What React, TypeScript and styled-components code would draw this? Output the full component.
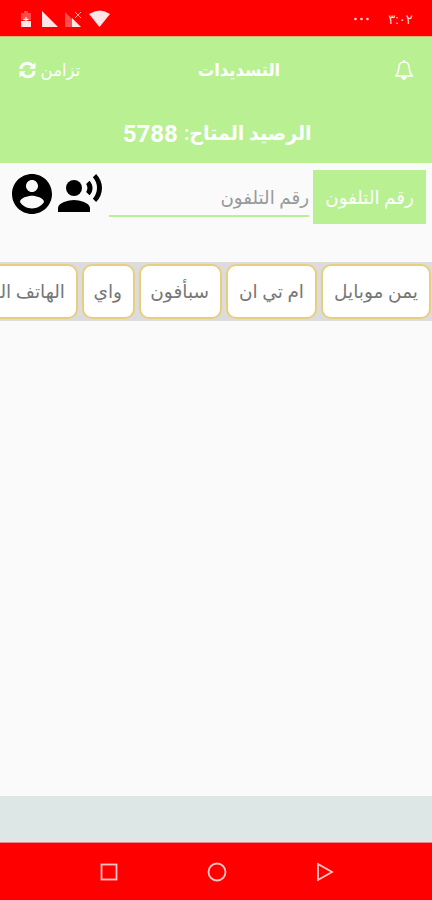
import React from "react";
import styled, { createGlobalStyle } from "styled-components";

const GlobalStyle = createGlobalStyle`
  * { box-sizing: border-box; }
  body { margin: 0; background: #fafafa; }
`;

const Screen = styled.div`
  display: flex;
  flex-direction: column;
  width: 432px;
  height: 900px;
  overflow: hidden;
  direction: rtl;
  background: #fafafa;
  font-family: Roboto, "DejaVu Sans", sans-serif;
`;

const Label = styled.span<{ $size: number; $stretch?: number; $y?: number }>`
  display: inline-block;
  flex: none;
  white-space: nowrap;
  line-height: 1.2;
  font-size: ${(p) => p.$size}px;
  transform: translateY(${(p) => p.$y ?? 0}px) scaleX(${(p) => p.$stretch ?? 1});
`;

const StatusBar = styled.div`
  display: flex;
  flex: none;
  align-items: center;
  justify-content: space-between;
  height: 36px;
  padding: 2px 19px 0 20px;
  background: #ff0000;
  color: #ffdada;
`;

const StatusTime = styled.div`
  display: flex;
  align-items: center;
  gap: 18px;
`;

const Header = styled.header`
  flex: none;
  height: 127px;
  background: #b8f092;
  border-top: 1px solid #d2b86b;
  color: #ffffff;
`;

const TitleBar = styled.div`
  display: grid;
  grid-template-columns: 100px 1fr 100px;
  align-items: center;
  height: 66px;
  padding: 0 18px 0 19px;
`;

const Title = styled.div`
  display: flex;
  justify-content: center;
  padding-left: 45px;
  font-weight: 700;
`;

const SyncButton = styled.div`
  display: flex;
  align-items: center;
  justify-content: flex-end;
  gap: 4px;
`;

const Balance = styled.div`
  display: flex;
  justify-content: center;
  align-items: center;
  gap: 6px;
  height: 61px;
  padding-left: 9px;
  font-weight: 700;

  span { transform-origin: left center; }
`;

const PhoneRow = styled.div`
  display: flex;
  flex: none;
  height: 99px;
  padding: 7px 6px 0 7.5px;
`;

const PhoneButton = styled.div`
  display: flex;
  align-items: center;
  justify-content: center;
  width: 113px;
  height: 54px;
  padding-top: 1px;
  background: #b8f092;
  color: #ffffff;
`;

const PhoneField = styled.div`
  display: flex;
  align-items: center;
  width: 200px;
  height: 47px;
  margin-right: 4px;
  padding-top: 10px;
  border-bottom: 2px solid #b8f092;
  color: #999999;
`;

const PhoneActions = styled.div`
  display: flex;
  flex: 1;
  justify-content: flex-end;
  height: 50px;

  svg { flex: none; }
`;

const ChipStrip = styled.div`
  display: flex;
  flex: none;
  gap: 4px;
  height: 59px;
  padding: 2px 1px;
  background: #dcdcdc;
  overflow: hidden;
`;

const Chip = styled.div<{ $width: number }>`
  display: flex;
  flex: none;
  align-items: center;
  width: ${(p) => p.$width}px;
  padding-right: 11px;
  border: 2px solid #e9cf7d;
  border-radius: 10px;
  background: #ffffff;
  color: #777777;
`;

const Content = styled.main`
  flex: 1;
`;

const Footer = styled.div`
  flex: none;
  height: 46px;
  background: #dde7e5;
`;

const NavBar = styled.nav`
  display: flex;
  flex: none;
  align-items: center;
  justify-content: center;
  gap: 84px;
  height: 58px;
  padding-left: 1px;
  border-top: 1px solid #f58583;
  background: #ff0000;
`;

const providers = [
  { name: "يمن موبايل", width: 110 },
  { name: "ام تي ان", width: 91 },
  { name: "سبأفون", width: 83 },
  { name: "واي", width: 53 },
  { name: "الهاتف الثابت", width: 130 },
];

const StatusIcons = () => (
  <svg width="92" height="20" viewBox="0 0 92 20" fill="#ffe6e6">
    <path d="M1 4h3V2h4v2h3v7H1z" opacity=".32" />
    <path d="M1 12h10v6H1z" />
    <path d="M6 8v5M3.500 10.500h5" stroke="#ffe6e6" strokeWidth="1.300" fill="none" />
    <path d="M22 2v16h16z" />
    <path d="M45 3l7 7v8h-7z" opacity=".35" />
    <path d="M52 9v9h9z" />
    <path d="M55 3l6 6m0-6-6 6" stroke="#ffb5b5" fill="none" />
    <path d="M69 5q11-7 21 0L79.500 18z" />
  </svg>
);

const SyncIcon = () => (
  <svg width="17" height="18" viewBox="0 0 17 18" fill="none" stroke="#fff" strokeWidth="3">
    <path d="M1.800 8A6.400 6.400 0 0 1 13.300 4.800" />
    <path d="M15.200 10A6.400 6.400 0 0 1 3.700 13.200" />
    <path d="M16.500 1.500v6.300h-6.300zM.5 16.500v-6.300h6.300z" fill="#fff" stroke="none" />
  </svg>
);

const BellIcon = () => (
  <svg width="20" height="22" viewBox="0 0 20 22" fill="none" stroke="#fff" strokeWidth="1.600" strokeLinejoin="round">
    <path d="M1.500 17h17c-2.400-2-3-4-3.200-8C15.100 5.300 13 3 10 3S4.900 5.300 4.700 9C4.500 13 3.900 15 1.500 17z" />
    <path d="M10 3V1" />
    <path d="M7 18h6q-1 3-3 3t-3-3z" fill="#fff" stroke="none" />
  </svg>
);

const VoiceIcon = () => (
  <svg width="48" height="48" viewBox="0 0 24 24" fill="#000">
    <circle cx="9" cy="9" r="4" />
    <path d="M9 15c-2.670 0-8 1.340-8 4v2h16v-2c0-2.660-5.330-4-8-4zM16.760 5.360l-1.680 1.690c.84 1.180.84 2.710 0 3.890l1.680 1.690c2.020-2.020 2.020-5.070 0-7.270zM20.070 2l-1.630 1.630c2.770 3.020 2.770 7.560 0 10.740L20.070 16c3.900-3.890 3.910-9.950 0-14z" />
  </svg>
);

const AccountIcon = () => (
  <svg width="48" height="48" viewBox="0 0 24 24" fill="#000">
    <path d="M12 2C6.480 2 2 6.480 2 12s4.480 10 10 10 10-4.480 10-10S17.520 2 12 2zm0 3c1.660 0 3 1.340 3 3s-1.340 3-3 3-3-1.340-3-3 1.340-3 3-3zm0 14.200c-2.500 0-4.710-1.280-6-3.220.03-1.990 4-3.080 6-3.080 1.990 0 5.970 1.090 6 3.080-1.290 1.940-3.500 3.220-6 3.220z" />
  </svg>
);

export default function App() {
  return (
    <Screen>
      <GlobalStyle />
      <StatusBar>
        <StatusTime>
          <Label $size={13.3} $y={1}>٣:٠٢</Label>
          <svg width="17" height="4" viewBox="0 0 17 4" fill="#ffdada">
            <circle cx="2.500" cy="2" r="1.300" />
            <circle cx="8.500" cy="2" r="1.300" />
            <circle cx="14.500" cy="2" r="1.300" />
          </svg>
        </StatusTime>
        <StatusIcons />
      </StatusBar>
      <Header>
        <TitleBar>
          <BellIcon />
          <Title><Label $size={17.5} $stretch={0.94}>التسديدات</Label></Title>
          <SyncButton>
            <Label $size={17} $stretch={0.97}>تزامن</Label>
            <SyncIcon />
          </SyncButton>
        </TitleBar>
        <Balance>
          <Label $size={20} $stretch={0.95} $y={-1}>الرصيد المتاح:</Label>
          <Label $size={24} $y={1}>5788</Label>
        </Balance>
      </Header>
      <PhoneRow>
        <PhoneButton><Label $size={18.3}>رقم التلفون</Label></PhoneButton>
        <PhoneField><Label $size={18.3}>رقم التلفون</Label></PhoneField>
        <PhoneActions>
          <VoiceIcon />
          <AccountIcon />
        </PhoneActions>
      </PhoneRow>
      <ChipStrip>
        {providers.map((p) => (
          <Chip key={p.name} $width={p.width}>
            <Label $size={18.5} $y={1}>{p.name}</Label>
          </Chip>
        ))}
      </ChipStrip>
      <Content />
      <Footer />
      <NavBar>
        <svg width="24" height="24" viewBox="0 0 24 24" fill="none" stroke="#ffc4c4" strokeWidth="1.800">
          <path d="M5 4l14 8-14 8z" />
        </svg>
        <svg width="24" height="24" viewBox="0 0 24 24" fill="none" stroke="#ffc4c4" strokeWidth="1.800">
          <circle cx="12" cy="12" r="8.500" />
        </svg>
        <svg width="24" height="24" viewBox="0 0 24 24" fill="none" stroke="#ffc4c4" strokeWidth="1.800">
          <rect x="4.500" y="4.500" width="15" height="15" />
        </svg>
      </NavBar>
    </Screen>
  );
}
